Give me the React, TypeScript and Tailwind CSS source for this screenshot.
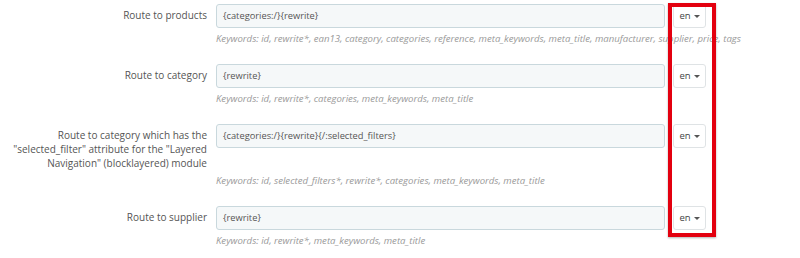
import React from "react";

const Caret = () => (
  <span className="ml-[3px] inline-block h-0 w-0 border-x-[3px] border-t-[3px] border-x-transparent border-t-[#555] align-middle" />
);

type Row = {
  label: React.ReactNode;
  value: string;
  help: string;
};

const rows: Row[] = [
  {
    label: "Route to products",
    value: "{categories:/}{rewrite}",
    help: "Keywords: id, rewrite*, ean13, category, categories, reference, meta_keywords, meta_title, manufacturer, supplier, price, tags",
  },
  {
    label: "Route to category",
    value: "{rewrite}",
    help: "Keywords: id, rewrite*, categories, meta_keywords, meta_title",
  },
  {
    label: (
      <>
        Route to category which has the
        <br />
        "selected_filter" attribute for the "Layered
        <br />
        Navigation" (blocklayered) module
      </>
    ),
    value: "{categories:/}{rewrite}{/:selected_filters}",
    help: "Keywords: id, selected_filters*, rewrite*, categories, meta_keywords, meta_title",
  },
  {
    label: "Route to supplier",
    value: "{rewrite}",
    help: "Keywords: id, rewrite*, meta_keywords, meta_title",
  },
];

export default function App() {
  return (
    <div
      className="relative h-[258px] w-[800px] overflow-hidden bg-white text-[10px] leading-[14px] text-[#555]"
      style={{ fontFamily: '"Open Sans", "Noto Sans", sans-serif' }}
    >
      <div className="flex flex-col pt-[4px]">
        {rows.map((r, i) => (
          <div key={i} className="mb-[18px] flex flex-col">
            <div className="flex items-start">
              <div className="w-[216px] shrink-0 pr-[9px] pt-[4px] text-right">{r.label}</div>
              <div className="flex h-[24px] w-[449px] items-center rounded-[3px] border border-[#c9d8dd] bg-[#f5f8f9] px-[6px] text-[9.3px] text-[#555]">
                {r.value}
              </div>
              <div className="ml-[8px] flex h-[24px] w-[33px] items-center justify-center rounded-[3px] border border-[#dfe3e5] bg-white text-[9.5px] text-[#444]">
                en
                <Caret />
              </div>
            </div>
            <div className="ml-[216px] mt-[4px] whitespace-nowrap text-[9.6px] italic text-[#9a9a9a]">{r.help}</div>
          </div>
        ))}
      </div>
      <div className="absolute left-[668px] top-[3px] h-[234px] w-[48px] border-[4px] border-[#e3000f] shadow-[0_1px_2px_rgba(0,0,0,0.3)]" />
    </div>
  );
}
